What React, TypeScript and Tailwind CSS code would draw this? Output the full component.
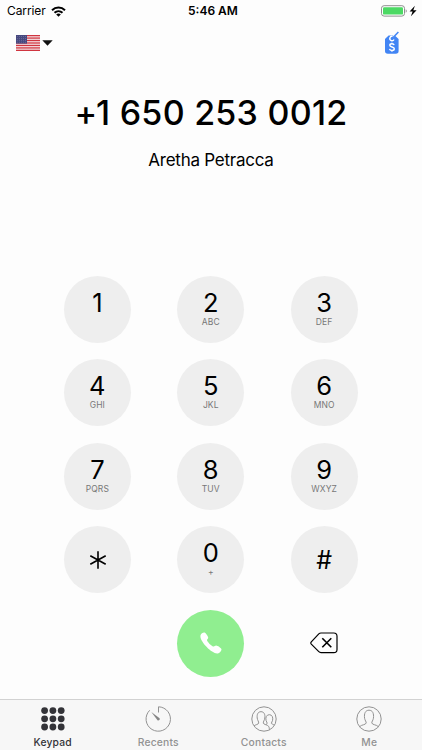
import React from "react";

const keys: { digit: string; letters: string }[] = [
  { digit: "1", letters: "" },
  { digit: "2", letters: "ABC" },
  { digit: "3", letters: "DEF" },
  { digit: "4", letters: "GHI" },
  { digit: "5", letters: "JKL" },
  { digit: "6", letters: "MNO" },
  { digit: "7", letters: "PQRS" },
  { digit: "8", letters: "TUV" },
  { digit: "9", letters: "WXYZ" },
  { digit: "*", letters: "" },
  { digit: "0", letters: "+" },
  { digit: "#", letters: "" },
];

function WifiIcon() {
  return (
    <svg width="15" height="11" viewBox="0 0 15 11" fill="none" stroke="#000" strokeWidth="2">
      <path d="M1 4.2C4.7.6 10.3.6 14 4.2" />
      <path d="M3.5 6.8c2.3-2.2 5.7-2.2 8 0" />
      <path d="M7.5 10.7 5.2 8.4c1.3-1.2 3.3-1.2 4.6 0Z" fill="#000" stroke="none" />
    </svg>
  );
}

function BatteryIcon() {
  return (
    <svg width="37" height="12" viewBox="0 0 37 12">
      <rect x="1.5" y=".7" width="23" height="10.4" rx="2.6" fill="#fff" stroke="#8f8f8f" />
      <rect x="3" y="2.2" width="20" height="7.4" rx="1.2" fill="#4cd964" />
      <path d="M25.7 4.2c1.4.5 1.4 3 0 3.5Z" fill="#8f8f8f" />
      <path d="M34.9 .8 29.6 6.6h3L30.9 11.2 36.6 5.2h-3.3Z" fill="#000" />
    </svg>
  );
}

function FlagIcon() {
  return (
    <svg width="24" height="16" viewBox="0 0 24 16">
      <rect width="24" height="16" fill="#f4dfe2" />
      {[0, 1, 2, 3, 4, 5, 6].map((i) => (
        <rect key={i} y={i * 2.46} width="24" height="1.23" fill="#d0343f" />
      ))}
      <rect width="11" height="8.6" fill="#46487f" />
      {[1.4, 3.3, 5.2, 7.1].map((y) =>
        [1.2, 3.3, 5.4, 7.5, 9.6].map((x) => (
          <circle key={`${x}-${y}`} cx={x} cy={y} r=".4" fill="#a3a4c4" />
        ))
      )}
    </svg>
  );
}

function RateTagIcon() {
  return (
    <svg width="16" height="24" viewBox="0 0 16 24" fill="none">
      <path d="M4.6 4.4h6.2L14.6 8v12q0 2.8-2.8 2.8H3.8Q1 22.8 1 20V8Z" fill="#4285f4" />
      <path d="M9.2 3.9h2.5L9 7.3Z" fill="#fdfdfd" />
      <path d="M8.4 7.2 14.4 1" stroke="#4285f4" strokeWidth="1.5" />
      <path d="M8.6 5.4A2.2 2.2 0 1 0 10 8.5" stroke="#fff" strokeWidth="1.4" />
      <path d="M10.1 14.1c-.2-.9-1-1.4-2.2-1.4-1.3 0-2.1.6-2.1 1.5 0 2.3 4.5 1.2 4.500 3.500 0 1.100-1 1.800-2.400 1.800s-2.200-.6-2.400-1.600M7.900 11.700v1.300M7.900 19.300v1.400" stroke="#fff" strokeWidth="1.4" />
    </svg>
  );
}

function AsteriskIcon() {
  return (
    <svg width="18" height="18" viewBox="0 0 18 18" fill="none" stroke="#000" strokeWidth="1.6">
      <path d="M9 .3v17.4M1.3 4.7l15.4 8.6M16.7 4.7 1.3 13.3" />
    </svg>
  );
}

function PhoneIcon() {
  return (
    <svg width="22" height="22" viewBox="0 0 22 22" fill="#fff">
      <path d="M1 2.2C2 .9 3.5.1 4.5.5c1.3.5 3.6 3.700 3.700 5.100.1 1-1.300 1.700-1.200 2.700.2 1.600 4.600 6 6.200 6.200 1 .1 2-1.200 3-1.100 1.400.1 4.700 2.300 5.200 3.600.5 1.400-1.800 4-3.600 4.400C12.700 22.500.7 10.700.4 4.600.4 3.700.5 2.900 1 2.200Z" />
    </svg>
  );
}

function BackspaceIcon() {
  return (
    <svg width="28" height="22" viewBox="0 0 28 22" fill="none" stroke="#000" strokeWidth="1.2" strokeLinejoin="round">
      <path d="M11 1h12.8Q27 1 27 4.2v13.2q0 3.2-3.2 3.2H11q-1.3 0-2.2-.9L1.3 12.2q-1-1.2 0-2.4L8.8 1.9Q9.700 1 11 1Z" />
      <path d="m12.3 6.300 9 9m0-9-9 9" strokeWidth="1.6" />
    </svg>
  );
}

function KeypadIcon() {
  return (
    <svg width="26" height="26" viewBox="0 0 26 26" fill="#333338">
      {[4.6, 12.8, 21].map((y) =>
        [4.6, 12.9, 21.2].map((x) => <circle key={`${x}-${y}`} cx={x} cy={y} r="3.4" />)
      )}
    </svg>
  );
}

function RecentsIcon() {
  return (
    <svg width="26" height="26" viewBox="0 0 26 26" fill="none" stroke="#929292" strokeWidth="1">
      <path d="M13.5 6.5V.8A12.2 12.2 0 1 1 4.7 4.3" />
      <path d="M6.3 6.1 14.6 12.2a1.5 1.5 0 0 1-2.1 2Z" fill="#858585" stroke="none" />
    </svg>
  );
}

function ContactsIcon() {
  return (
    <svg width="26" height="26" viewBox="0 0 26 26" fill="none" stroke="#929292" strokeWidth="1">
      <circle cx="13" cy="13" r="12.2" />
      <path d="M3 20c1.200-1.400 4.500-1.500 4.700-2.900.2-1.300-1.300-3-1.500-5.100C5.800 8.200 7 5.700 10 5.700s4.300 2.500 3.800 6.300c-.2 2.100-1.700 3.800-1.500 5.100.2 1.500 4 1.400 5.300 3.200.8 1.100.7 2.800.7 3.800" />
      <path d="M14.500 18.600c.7-.4 1.700-.6 1.700-1.400s-.9-1.500-1.200-2.900c-.6-3 .5-5.600 3.300-5.600s3.900 2.600 3.300 5.600c-.3 1.400-1.200 2.100-1.200 2.900 0 1 1.900.9 3 2" />
    </svg>
  );
}

function MeIcon() {
  return (
    <svg width="26" height="26" viewBox="0 0 26 26" fill="none" stroke="#929292" strokeWidth="1">
      <circle cx="13" cy="13" r="12.2" />
      <path d="M3.700 20.700c1.600-2.200 6.300-1.700 6.500-3.800.1-1.200-1.200-2.400-1.600-4.600-.7-4.800.8-8.100 4.400-8.100s5.100 3.300 4.400 8.100c-.4 2.200-1.700 3.400-1.600 4.600.2 2.100 4.900 1.600 6.500 3.800" />
    </svg>
  );
}

const tabs = [
  { label: "Keypad", icon: <KeypadIcon />, style: "text-[#333338]" },
  { label: "Recents", icon: <RecentsIcon />, style: "text-[#929292]" },
  { label: "Contacts", icon: <ContactsIcon />, style: "text-[#929292]" },
  { label: "Me", icon: <MeIcon />, style: "text-[#929292]" },
];

export default function App() {
  return (
    <div className="flex h-[750px] w-[422px] flex-col overflow-hidden bg-[#fdfdfd] font-['Inter',sans-serif] text-black">
      <div className="grid h-[22px] grid-cols-3 items-center pl-[7px] pr-[5px]">
        <div className="flex items-center gap-[5px]">
          <span className="text-[12px] leading-[22px] tracking-[-0.1px]">Carrier</span>
          <WifiIcon />
        </div>
        <span className="pl-[2px] text-center text-[12px] leading-[22px] font-semibold">5:46 AM</span>
        <div className="flex justify-end">
          <BatteryIcon />
        </div>
      </div>

      <div className="flex h-[42px] items-center justify-between pl-4 pr-[22px]">
        <button className="flex items-center gap-[2px]">
          <FlagIcon />
          <svg width="11" height="6" viewBox="0 0 11 6">
            <path d="M.3.3h10.4L5.5 5.8Z" fill="#111" />
          </svg>
        </button>
        <button>
          <RateTagIcon />
        </button>
      </div>

      <div className="flex h-[211px] flex-col items-center pt-[28px]">
        <h1 className="text-[34px] leading-[42px] font-medium tracking-[0.25px] whitespace-nowrap">
          <span className="tracking-[-1.2px]">+</span>1 650 253 0012
        </h1>
        <p className="mt-[15px] text-[17px] leading-[22px] tracking-[-0.25px]">Aretha Petracca</p>
      </div>

      <div className="grid grid-cols-[67px_67px_67px] justify-center gap-x-[46.4px] gap-y-[16.5px] pt-[0.5px] pr-[0.5px]">
        {keys.map(({ digit, letters }) => (
          <button key={digit} className="flex h-[67px] w-[67px] flex-col items-center rounded-full bg-[#eeeeee]">
            {digit === "*" ? (
              <span className="flex h-full items-center pl-px">
                <AsteriskIcon />
              </span>
            ) : digit === "#" ? (
              <span className="pt-px text-[25px] leading-[67px]">#</span>
            ) : (
              <>
                <span className="mt-[11px] text-[25.5px] leading-[32px]">{digit}</span>
                <span className="text-[8.5px] leading-[6px] tracking-[0.1px] text-[#777]">{letters}</span>
              </>
            )}
          </button>
        ))}
        <button className="col-start-2 flex h-[67px] w-[67px] items-center justify-center rounded-full bg-[#90ee90]">
          <PhoneIcon />
        </button>
        <button className="flex h-[67px] w-[67px] items-center justify-center">
          <BackspaceIcon />
        </button>
      </div>

      <nav className="mt-auto grid h-[51px] grid-cols-4 border-t border-[#d2d2d2] bg-[#f7f7f7]">
        {tabs.map(({ label, icon, style }) => (
          <button key={label} className={`flex flex-col items-center pt-[6px] ${style}`}>
            {icon}
            <span className="mt-[3px] text-[10.3px] leading-[14px] font-medium tracking-[0.2px]">{label}</span>
          </button>
        ))}
      </nav>
    </div>
  );
}
